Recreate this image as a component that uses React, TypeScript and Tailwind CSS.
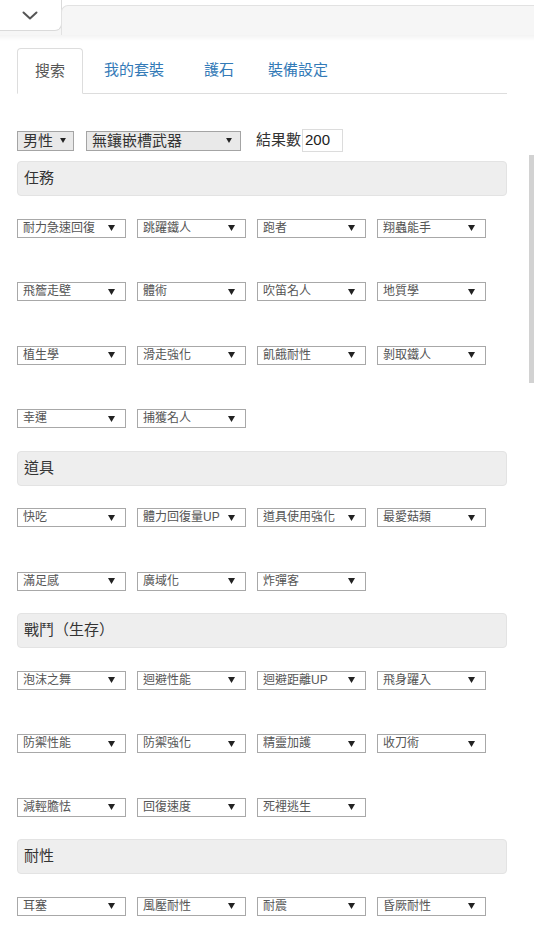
import React from "react";

const sections: { title: string; items: string[] }[] = [
  {
    title: "任務",
    items: [
      "耐力急速回復", "跳躍鐵人", "跑者", "翔蟲能手",
      "飛簷走壁", "體術", "吹笛名人", "地質學",
      "植生學", "滑走強化", "飢餓耐性", "剝取鐵人",
      "幸運", "捕獲名人",
    ],
  },
  {
    title: "道具",
    items: ["快吃", "體力回復量UP", "道具使用強化", "最愛菇類", "滿足感", "廣域化", "炸彈客"],
  },
  {
    title: "戰鬥（生存）",
    items: [
      "泡沫之舞", "迴避性能", "迴避距離UP", "飛身躍入",
      "防禦性能", "防禦強化", "精靈加護", "收刀術",
      "減輕膽怯", "回復速度", "死裡逃生",
    ],
  },
  {
    title: "耐性",
    items: ["耳塞", "風壓耐性", "耐震", "昏厥耐性"],
  },
];

function Arrow({ w = 7, h = 6 }: { w?: number; h?: number }) {
  return (
    <svg width={w} height={h} viewBox="0 0 7 6" className="shrink-0">
      <polygon points="0,0 7,0 3.5,6" fill="#222" />
    </svg>
  );
}

function SmallSelect({ label }: { label: string }) {
  return (
    <div className="w-[109px] h-[19px] border border-[#a8a8a8] bg-white flex items-center pl-[5px] pr-[10px] box-border">
      <span className="flex-1 text-[12px] leading-[17px] text-[#555] whitespace-nowrap overflow-hidden">{label}</span>
      <Arrow />
    </div>
  );
}

export default function App() {
  return (
    <div className="relative min-h-[949px] bg-white font-['Liberation_Sans','Noto_Sans_CJK_TC',sans-serif] text-[#333]">
      {/* top bar */}
      <div className="flex h-[35px]">
        <div className="w-[62px] bg-[#f6f6f6]">
          <div className="h-[31px] bg-white border-b border-r border-[#dadada] rounded-br-[7px] flex items-center justify-center">
            <svg width="16" height="9" viewBox="0 0 16 9" className="mr-[2px]">
              <polyline points="1.5,1.5 8,7.5 14.5,1.5" fill="none" stroke="#555" strokeWidth="2" strokeLinecap="round" strokeLinejoin="round" />
            </svg>
          </div>
        </div>
        <div className="flex-1 bg-white flex flex-col">
          <div className="h-[5px]" />
          <div className="flex-1 bg-[#f6f6f6] border-t border-l border-[#e2e2e2] rounded-tl-[7px] -ml-px" />
        </div>
      </div>
      <div className="h-[6px] bg-gradient-to-b from-[#f3f3f3] to-white" />

      <div className="pl-[17px] pr-[27px]">
        {/* tabs */}
        <div className="mt-[7px] flex border-b border-[#dddddd] h-[46px]">
          <div className="h-[46px] px-[17px] border border-[#dddddd] border-b-white rounded-t-[4px] bg-white flex items-center text-[15px] text-[#555] mr-[21px]">
            搜索
          </div>
          <div className="flex items-center text-[15px] text-[#337ab7] mr-[40px]">我的套裝</div>
          <div className="flex items-center text-[15px] text-[#337ab7] mr-[34px]">護石</div>
          <div className="flex items-center text-[15px] text-[#337ab7]">裝備設定</div>
        </div>

        {/* controls */}
        <div className="mt-[35px] flex items-center h-[23px]">
          <div className="w-[57px] h-[20px] border border-[#a4a4a4] bg-[#e9e9e9] flex items-center pl-[5px] pr-[7px] box-border">
            <span className="flex-1 text-[15px] leading-[18px] text-[#333]">男性</span>
            <Arrow w={6} h={5} />
          </div>
          <div className="ml-[12px] w-[155px] h-[20px] border border-[#a4a4a4] bg-[#e9e9e9] flex items-center pl-[5px] pr-[8px] box-border">
            <span className="flex-1 text-[15px] leading-[18px] text-[#333]">無鑲嵌槽武器</span>
            <Arrow w={6} h={5} />
          </div>
          <span className="ml-[15px] text-[15px] text-[#333]">結果數</span>
          <div className="ml-[1px] w-[41px] h-[23px] border border-[#dcdcdc] bg-white flex items-center pl-[2px] text-[15px] text-[#222]">
            200
          </div>
        </div>

        {/* sections */}
        <div className="mt-[9px]">
          {sections.map((s, i) => (
            <div key={s.title} className={i === 0 ? "" : "mt-[22.5px]"}>
              <div className="h-[35px] bg-[#eeeeee] border border-[#e3e3e3] rounded-[4px] flex items-center pl-[6px] text-[15px] text-[#333]">
                {s.title}
              </div>
              <div className="mt-[22.5px] flex flex-wrap gap-x-[11px] gap-y-[44.5px]">
                {s.items.map((it) => (
                  <SmallSelect key={it} label={it} />
                ))}
              </div>
            </div>
          ))}
        </div>
      </div>

      {/* scroll indicator */}
      <div className="absolute right-0 top-[155px] w-[5px] h-[228px] bg-[#d2d2d2]" />
    </div>
  );
}
